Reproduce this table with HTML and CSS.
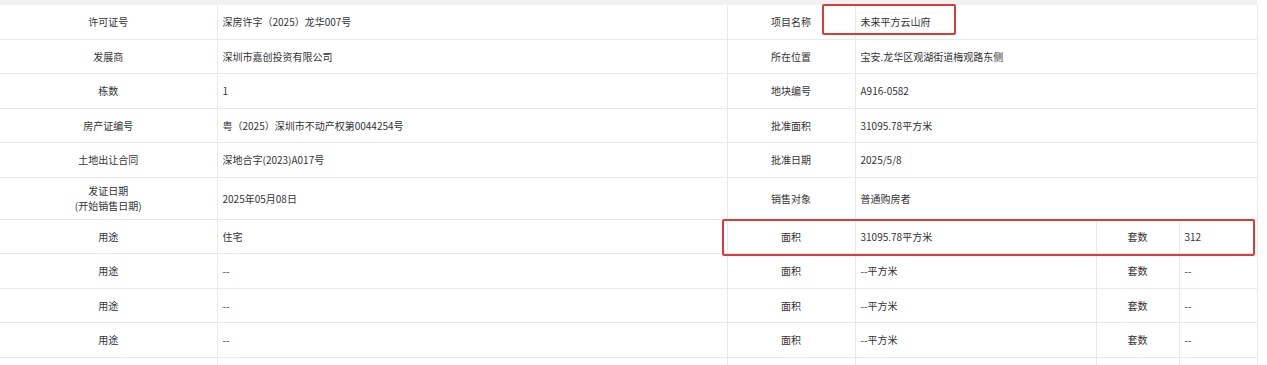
FILE: index.html
```html
<!DOCTYPE html>
<html lang="zh-CN">
<head>
<meta charset="utf-8">
<title>项目信息</title>
<link rel="stylesheet" href="styles.css">
</head>
<body>
<div class="wrap">
  <div class="topbar"></div>
  <table class="info">
    <colgroup>
      <col class="c1"><col class="c2"><col class="c3"><col class="c4"><col class="c5"><col class="c6">
    </colgroup>
    <tbody>
      <tr><td class="lb">许可证号</td><td class="val">深房许字（2025）龙华007号</td><td class="lb">项目名称</td><td class="val" colspan="3">未来平方云山府</td></tr>
      <tr><td class="lb">发展商</td><td class="val">深圳市嘉创投资有限公司</td><td class="lb">所在位置</td><td class="val" colspan="3">宝安.龙华区观湖街道梅观路东侧</td></tr>
      <tr><td class="lb">栋数</td><td class="val">1</td><td class="lb">地块编号</td><td class="val" colspan="3">A916-0582</td></tr>
      <tr><td class="lb">房产证编号</td><td class="val">粤（2025）深圳市不动产权第0044254号</td><td class="lb">批准面积</td><td class="val" colspan="3">31095.78平方米</td></tr>
      <tr><td class="lb">土地出让合同</td><td class="val">深地合字(2023)A017号</td><td class="lb">批准日期</td><td class="val" colspan="3">2025/5/8</td></tr>
      <tr class="tall"><td class="lb">发证日期<br>(开始销售日期)</td><td class="val">2025年05月08日</td><td class="lb">销售对象</td><td class="val" colspan="3">普通购房者</td></tr>
      <tr><td class="lb">用途</td><td class="val">住宅</td><td class="lb">面积</td><td class="val">31095.78平方米</td><td class="lb">套数</td><td class="val">312</td></tr>
      <tr><td class="lb">用途</td><td class="val">--</td><td class="lb">面积</td><td class="val">--平方米</td><td class="lb">套数</td><td class="val">--</td></tr>
      <tr><td class="lb">用途</td><td class="val">--</td><td class="lb">面积</td><td class="val">--平方米</td><td class="lb">套数</td><td class="val">--</td></tr>
      <tr><td class="lb">用途</td><td class="val">--</td><td class="lb">面积</td><td class="val">--平方米</td><td class="lb">套数</td><td class="val">--</td></tr>
      <tr><td class="lb"></td><td class="val"></td><td class="lb"></td><td class="val"></td><td class="lb"></td><td class="val"></td></tr>
    </tbody>
  </table>
  <div class="mark mark-name"></div>
  <div class="mark mark-area"></div>
</div>
</body>
</html>
```
FILE: styles.css
```css
html, body {
  margin: 0;
  padding: 0;
  background: #ffffff;
}
body {
  font-family: "Microsoft YaHei", "Noto Sans CJK SC", "Noto Sans", sans-serif;
  font-size: 10px;
  color: #333333;
  overflow: hidden;
}
.wrap {
  position: relative;
  width: 1257px;
}
.topbar {
  height: 5px;
  background: #f1f1f1;
}
.info {
  width: 1257px;
  border-collapse: collapse;
  table-layout: fixed;
}
.c1 { width: 217px; }
.c2 { width: 510px; }
.c3 { width: 128px; }
.c4 { width: 241px; }
.c5 { width: 83px; }
.c6 { width: 78px; }
.info td {
  border: 1px solid #e9e9e9;
  height: 33.5px;
  padding: 0 5px;
  line-height: 15px;
  vertical-align: middle;
  white-space: nowrap;
}
.info tr:first-child td {
  border-top: none;
}
.info td:first-child {
  border-left: none;
}
.info tr.tall td {
  height: 41px;
}
.lb {
  text-align: center;
}
.val {
  text-align: left;
}
.mark {
  position: absolute;
  border: 2px solid #dc3b3b;
  border-radius: 2px;
  box-sizing: border-box;
  pointer-events: none;
}
.mark-name {
  left: 822px;
  top: 4px;
  width: 134px;
  height: 31px;
}
.mark-area {
  left: 722px;
  top: 219px;
  width: 533px;
  height: 37px;
}
```
